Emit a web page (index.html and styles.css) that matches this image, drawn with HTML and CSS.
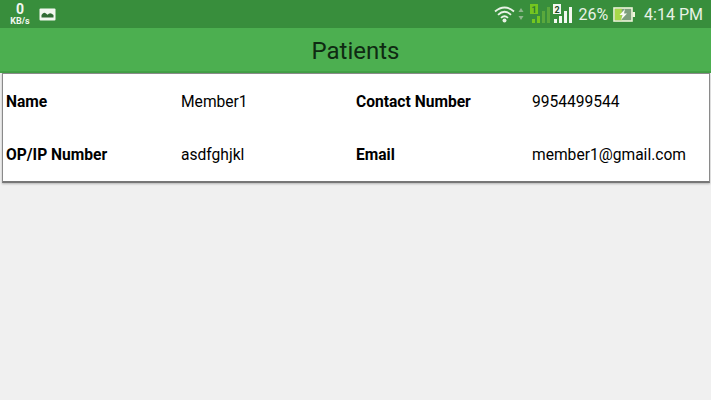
FILE: index.html
```html
<!doctype html>
<html>
  <head>
    <meta charset="utf-8">
    <title>Patients</title>
    <link rel="stylesheet" href="styles.css">
  </head>

  <body>
    <div class="status-bar">
      <div class="status-left">
        <div class="speed"><b>0</b><span>KB/s</span></div>
        <svg class="gallery" width="17" height="13" viewBox="0 0 17 13">
          <rect x="0.5" y="0.5" width="16" height="12" rx="1" fill="#f2f7f0"/>
          <path d="M2.5 9.5 L2.5 7 Q5 3.5 7 5.6 L8.5 6.8 Q11 3.5 14.5 7 L14.5 9.5 Z" fill="#2f6b33"/>
        </svg>
      </div>
      <div class="status-right">
        <svg class="wifi" width="21" height="18" viewBox="0 0 21 18" fill="none" stroke="#e9f2e7" stroke-width="1.8">
          <path d="M1 6.5 Q10.5 -1.5 20 6.5"/>
          <path d="M4 9.8 Q10.5 3.8 17 9.8"/>
          <path d="M7 12.8 Q10.5 9.6 14 12.8"/>
          <circle cx="10.5" cy="15.5" r="2" fill="#e9f2e7" stroke="none"/>
        </svg>
        <svg class="arrows" width="6" height="14" viewBox="0 0 6 14" fill="#8fb78f">
          <path d="M3 1 L5.5 5 L0.5 5 Z"/>
          <path d="M3 13 L5.5 9 L0.5 9 Z"/>
        </svg>
        <svg class="sim-one" width="20" height="20" viewBox="0 0 20 20">
          <rect x="0" y="0" width="8" height="10" fill="#74c61f"/>
          <text x="4" y="8.5" class="sim-num" fill="#2f7d32">1</text>
          <rect x="2" y="15" width="3" height="4" fill="#74c61f"/>
          <rect x="7" y="12" width="3" height="7" fill="#74c61f"/>
          <rect x="12" y="7" width="3" height="12" fill="#5aa83c"/>
          <rect x="17" y="3" width="3" height="16" fill="#5aa83c"/>
        </svg>
        <svg class="sim-two" width="20" height="20" viewBox="0 0 20 20" fill="#f4f8f2">
          <rect x="0" y="0" width="8" height="10"/>
          <text x="4" y="8.5" class="sim-num" fill="#1f4a24">2</text>
          <rect x="1" y="15" width="3" height="4"/>
          <rect x="6" y="12" width="3" height="7"/>
          <rect x="11" y="7" width="3" height="12"/>
          <rect x="16" y="3" width="3" height="16"/>
        </svg>
        <span class="battery-text">26%</span>
        <svg class="battery" width="22" height="15" viewBox="0 0 22 15">
          <rect x="1" y="1" width="18" height="13" fill="#7d9f7d" stroke="#eef5da" stroke-width="1.6"/>
          <rect x="1.8" y="1.8" width="7" height="11.4" fill="#a8d84a"/>
          <rect x="19.5" y="5" width="2.5" height="5" fill="#eef5da"/>
          <path d="M12 2 L6.5 8 L9.5 8 L8 13 L14 6.5 L11 6.5 Z" fill="#f8fbf2"/>
        </svg>
        <span class="clock">4:14 PM</span>
      </div>
    </div>

    <header class="title-bar">
      <h1>Patients</h1>
    </header>

    <main>
      <section class="card">
        <div class="label">Name</div>
        <div class="value">Member1</div>
        <div class="label">Contact Number</div>
        <div class="value">9954499544</div>
        <div class="label">OP/IP Number</div>
        <div class="value">asdfghjkl</div>
        <div class="label">Email</div>
        <div class="value">member1@gmail.com</div>
      </section>
    </main>
  </body>
</html>
```

FILE: styles.css
```css
/* CSS Reset */
*,
*::before,
*::after {
  box-sizing: border-box;
  margin: 0;
  padding: 0;
}

body {
  font-family: Roboto, "Liberation Sans", sans-serif;
  background-color: #f0f0f0;
  color: #111;
  height: 400px;
  overflow: hidden;
}

.status-bar {
  height: 28px;
  background-color: #388e3c;
  color: #e8f2e6;
  display: flex;
  justify-content: space-between;
  align-items: center;
  padding: 0 8px 0 9px;
}

.status-left {
  display: flex;
  align-items: center;
  gap: 8px;
}

.speed {
  display: flex;
  flex-direction: column;
  align-items: center;
  gap: 2px;
  width: 22px;
  color: #f2f7f0;
}

.speed b {
  font-size: 14px;
  line-height: 11px;
}

.speed span {
  font-size: 9px;
  font-weight: 700;
  line-height: 8px;
}

.status-right {
  display: flex;
  align-items: center;
}

.wifi {
  margin-right: 3px;
}

.arrows {
  margin-right: 6px;
}

.sim-one {
  margin-right: 3px;
}

.sim-two {
  margin-right: 5px;
}

.sim-num {
  font-size: 9px;
  font-weight: 700;
  text-anchor: middle;
}

.battery-text {
  font-size: 16px;
  margin-right: 5px;
}

.battery {
  margin-right: 9px;
}

.clock {
  font-size: 16px;
}

.title-bar {
  height: 45px;
  padding-top: 2px;
  background-color: #4caf50;
  border-bottom: 2px solid #43a047;
  display: flex;
  align-items: center;
  justify-content: center;
}

.title-bar h1 {
  font-size: 24px;
  font-weight: 400;
  color: #0f2a12;
}

main {
  padding: 0 1px 0 2px;
}

.card {
  height: 110px;
  background-color: #fff;
  border: 1px solid #8a8a8a;
  border-bottom: 2px solid #777;
  box-shadow: 0 1px 2px rgba(0, 0, 0, 0.25);
  display: grid;
  grid-template-columns: 175px 175px 176px 1fr;
  grid-auto-rows: 53px;
  align-content: center;
  padding: 1px 0 0 3px;
  font-size: 15.6px;
  color: #000;
}

.label,
.value {
  display: flex;
  align-items: center;
}

.label {
  font-weight: 700;
}
```
